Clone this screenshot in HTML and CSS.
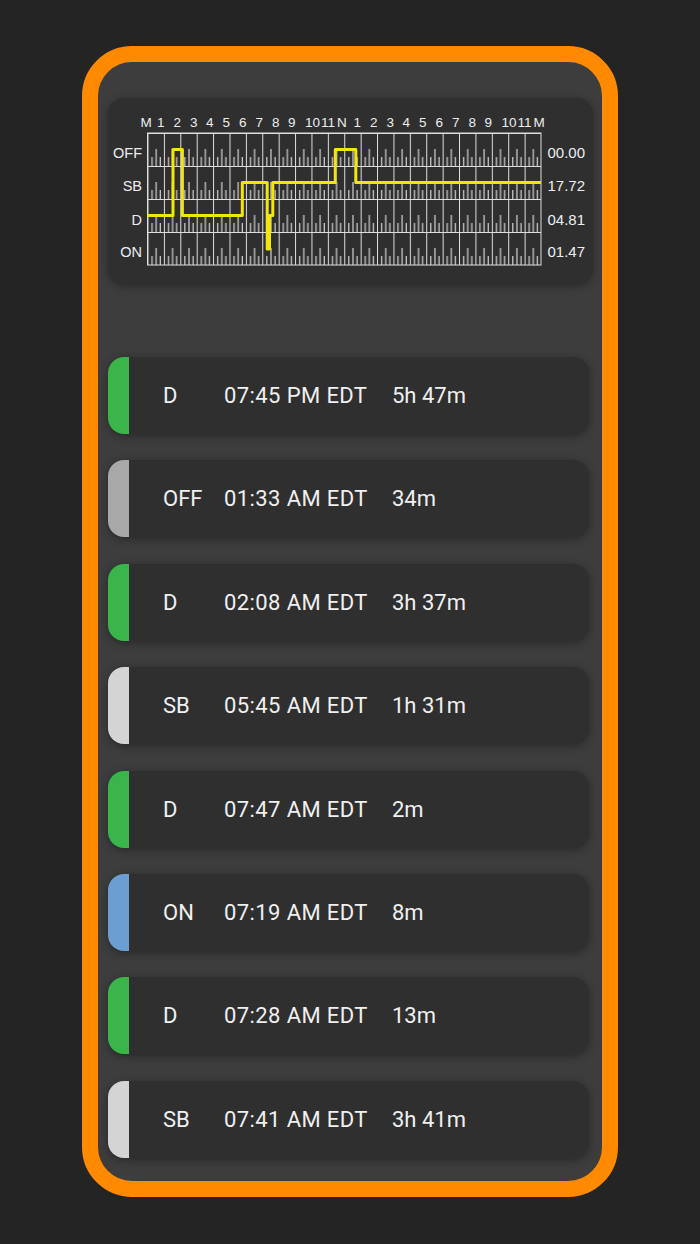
FILE: index.html
```html
<!DOCTYPE html>
<html>
<head>
<meta charset="utf-8">
<link rel="stylesheet" href="styles.css">
</head>
<body>
<div class="frame">
  <div class="chart-card">
    <svg class="chart" width="485" height="186" viewBox="108 98 485 186">
      <defs>
        <pattern id="hour" patternUnits="userSpaceOnUse" x="147.5" y="133" width="16.396" height="33">
          <line x1="0.5" y1="0" x2="0.5" y2="33" class="grid"/>
          <line x1="0" y1="0.5" x2="16.396" y2="0.5" class="grid"/>
          <line x1="4.6" y1="24" x2="4.6" y2="33" class="tick"/>
          <line x1="8.7" y1="16" x2="8.7" y2="33" class="tick"/>
          <line x1="12.8" y1="24" x2="12.8" y2="33" class="tick"/>
        </pattern>
      </defs>
      <rect x="147.5" y="133" width="393.5" height="132" fill="url(#hour)"/>
      <rect x="147.5" y="133" width="393.5" height="132" class="border"/>
      <g class="hours">
        <text x="140.5">M</text>
        <text x="157">1</text>
        <text x="173.5">2</text>
        <text x="190">3</text>
        <text x="206">4</text>
        <text x="222.5">5</text>
        <text x="239">6</text>
        <text x="255.5">7</text>
        <text x="272">8</text>
        <text x="288">9</text>
        <text x="305">10</text>
        <text x="321">11</text>
        <text x="337">N</text>
        <text x="353.5">1</text>
        <text x="370">2</text>
        <text x="386.5">3</text>
        <text x="402.5">4</text>
        <text x="419">5</text>
        <text x="435.5">6</text>
        <text x="452">7</text>
        <text x="468.5">8</text>
        <text x="484.5">9</text>
        <text x="501.5">10</text>
        <text x="517.5">11</text>
        <text x="533.5">M</text>
      </g>
      <g class="left">
        <text x="142" y="158">OFF</text>
        <text x="142" y="191">SB</text>
        <text x="142" y="224.5">D</text>
        <text x="142" y="257">ON</text>
      </g>
      <g class="right">
        <text x="547.5" y="158">00.00</text>
        <text x="547.5" y="191">17.72</text>
        <text x="547.5" y="224.5">04.81</text>
        <text x="547.5" y="257">01.47</text>
      </g>
      <path class="trace" d="M147.5 215.5 H173 V149.5 H182.4 V215.5 H242.3 V182.5 H267.2 V249 H269.5 V215.5 H272.8 V182.5 H335.3 V149.5 H355.8 V182.5 H541"/>
    </svg>
  </div>
  <div class="list">
    <div class="row"><span class="bar green"></span><span class="status">D</span><span class="time">07:45 PM EDT</span><span class="dur">5h 47m</span></div>
    <div class="row"><span class="bar gray"></span><span class="status">OFF</span><span class="time">01:33 AM EDT</span><span class="dur">34m</span></div>
    <div class="row"><span class="bar green"></span><span class="status">D</span><span class="time">02:08 AM EDT</span><span class="dur">3h 37m</span></div>
    <div class="row"><span class="bar light"></span><span class="status">SB</span><span class="time">05:45 AM EDT</span><span class="dur">1h 31m</span></div>
    <div class="row"><span class="bar green"></span><span class="status">D</span><span class="time">07:47 AM EDT</span><span class="dur">2m</span></div>
    <div class="row"><span class="bar blue"></span><span class="status">ON</span><span class="time">07:19 AM EDT</span><span class="dur">8m</span></div>
    <div class="row"><span class="bar green"></span><span class="status">D</span><span class="time">07:28 AM EDT</span><span class="dur">13m</span></div>
    <div class="row"><span class="bar light"></span><span class="status">SB</span><span class="time">07:41 AM EDT</span><span class="dur">3h 41m</span></div>
  </div>
</div>
</body>
</html>
```
FILE: styles.css
```css
html, body {
  margin: 0;
  padding: 0;
  background: #242424;
}
body {
  width: 700px;
  height: 1244px;
  overflow: hidden;
  font-family: Roboto, "Liberation Sans", sans-serif;
}
.frame {
  box-sizing: border-box;
  margin: 46px 0 0 82px;
  width: 536px;
  height: 1151px;
  border: 16px solid #ff8a00;
  border-radius: 50px;
  background: #3d3d3d;
  padding: 36px 9px 0 10px;
}
.chart-card {
  width: 485px;
  height: 186px;
  background: #2f2f2f;
  border-radius: 16px;
  box-shadow: 0 2px 8px rgba(0,0,0,0.35);
  overflow: hidden;
}
.chart {
  display: block;
  font-family: "Liberation Sans", Arial, sans-serif;
}
.grid { stroke: #dedede; stroke-width: 1; }
.tick { stroke: #e2e2e2; stroke-width: 1.1; }
.border { fill: none; stroke: #dedede; stroke-width: 1; }
.hours text { font-size: 13.5px; fill: #ededed; }
.hours { transform: translateY(126.5px); }
.left text { font-size: 14.5px; fill: #ededed; text-anchor: end; }
.right text { font-size: 15px; fill: #ededed; }
.trace { fill: none; stroke: #f3e60c; stroke-width: 3; stroke-linejoin: round; }
.list {
  margin-top: 73px;
  display: flex;
  flex-direction: column;
  gap: 26.4px;
  width: 481px;
}
.row {
  height: 77px;
  display: flex;
  align-items: center;
  background: #2f2f2f;
  border-radius: 16px;
  box-shadow: 0 2px 8px rgba(0,0,0,0.35);
  color: #f0f0f0;
  font-size: 22px;
}
.bar {
  align-self: stretch;
  width: 21px;
  border-radius: 16px 0 0 16px;
}
.green { background: #39b54a; }
.gray { background: #a8a8a8; }
.light { background: #d4d4d4; }
.blue { background: #6c9ed2; }
.status { margin-left: 34px; width: 61px; }
.time { width: 168px; letter-spacing: 0.4px; }
```
